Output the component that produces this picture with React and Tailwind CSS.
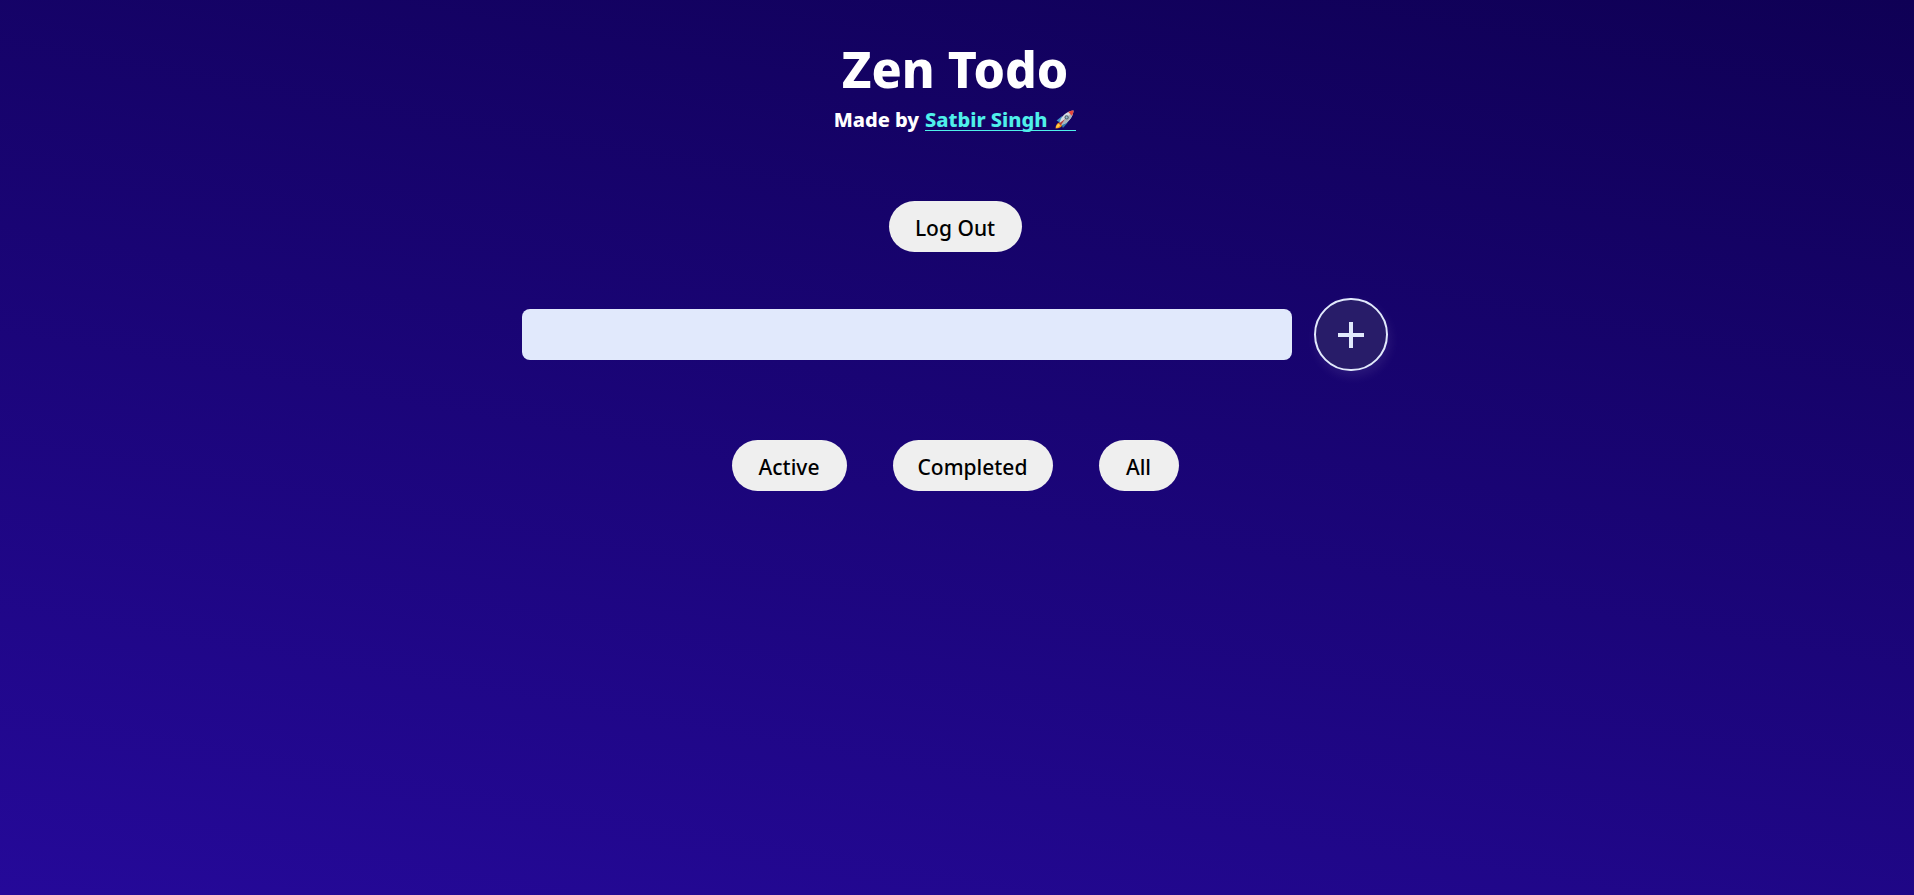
import React, { useState } from "react";

const pill =
  "h-[51px] rounded-full bg-[#efefef] pt-0.5 text-center text-[21px] leading-6 font-medium text-black";

function Rocket() {
  return (
    <svg viewBox="0 0 36 36" className="size-[19px] shrink-0" role="img" aria-label="rocket">
      <path d="M1 35C1 29 4 24 9 23l5 5c-1 4-6 7-13 7Z" fill="#f4900c" />
      <path d="M2 34c0-4 2-7 6-8l2 2c-1 3-4 5-8 6Z" fill="#ffcc4d" />
      <path d="M3 20 13 12l5 3-8 9Z" fill="#4296cb" />
      <path d="m15 34 9-10-3-5-9 8Z" fill="#3278ad" />
      <path d="M9 24C11 13 20 3 35 1c-1 14-11 24-22 27Z" fill="#d7dce1" />
      <path d="M13 28C24 25 34 15 35 1L11 26Z" fill="#aab4bd" />
      <path d="M25 4c3-2 6-3 10-3 0 4-1 7-3 10Z" fill="#e7463c" />
      <circle cx="22" cy="14" r="4" fill="#53616c" />
      <circle cx="22" cy="14" r="2" fill="#90bdd4" />
      <path d="m7 26 12-9-8 12Z" fill="#b63c38" />
    </svg>
  );
}

export default function App() {
  const [text, setText] = useState("");
  return (
    <main className="flex min-h-screen flex-col items-center bg-[linear-gradient(10deg,#250999,#0f0055)] pt-10 pr-7 pl-6 font-['Noto_Sans',sans-serif] text-white">
      <h1 className="text-[50px] leading-[58px] font-extrabold">Zen Todo</h1>
      <h2 className="mt-2.5 flex h-6 items-center gap-1.5 text-[20px] leading-5 font-extrabold">
        <span className="border-b border-transparent">Made by</span>
        <a
          href="#author"
          className="flex items-center gap-2 border-b border-[#4ff0ea] pr-0.5 text-[#4ff0ea]"
        >
          Satbir Singh <Rocket />
        </a>
      </h2>
      <button type="button" className={`mt-[69px] w-[133px] ${pill}`}>
        Log Out
      </button>
      <form
        className="mt-[46px] flex w-full max-w-[866px] items-center gap-[22px]"
        onSubmit={(e) => e.preventDefault()}
      >
        <input
          type="text"
          aria-label="New todo"
          value={text}
          onChange={(e) => setText(e.target.value)}
          className="h-[51px] min-w-0 flex-1 rounded-lg bg-[#e1e9fc] px-4 text-[21px] text-black outline-none"
        />
        <button
          type="submit"
          aria-label="Add todo"
          className="flex h-[73px] w-[74px] shrink-0 items-center justify-center rounded-full border-2 border-[#e1e9fc] bg-[#281c69] shadow-[2px_5px_12px_rgba(255,255,255,0.09)]"
        >
          <svg viewBox="0 0 26 26" className="size-[26px]" aria-hidden="true">
            <path d="M11 0h4v11h11v4H15v11h-4V15H0v-4h11Z" fill="#e1e9fc" />
          </svg>
        </button>
      </form>
      <div className="mt-[69px] flex gap-[46px]">
        <button type="button" className={`w-[115px] ${pill}`}>Active</button>
        <button type="button" className={`w-[160px] ${pill}`}>Completed</button>
        <button type="button" className={`w-[80px] ${pill}`}>All</button>
      </div>
    </main>
  );
}
